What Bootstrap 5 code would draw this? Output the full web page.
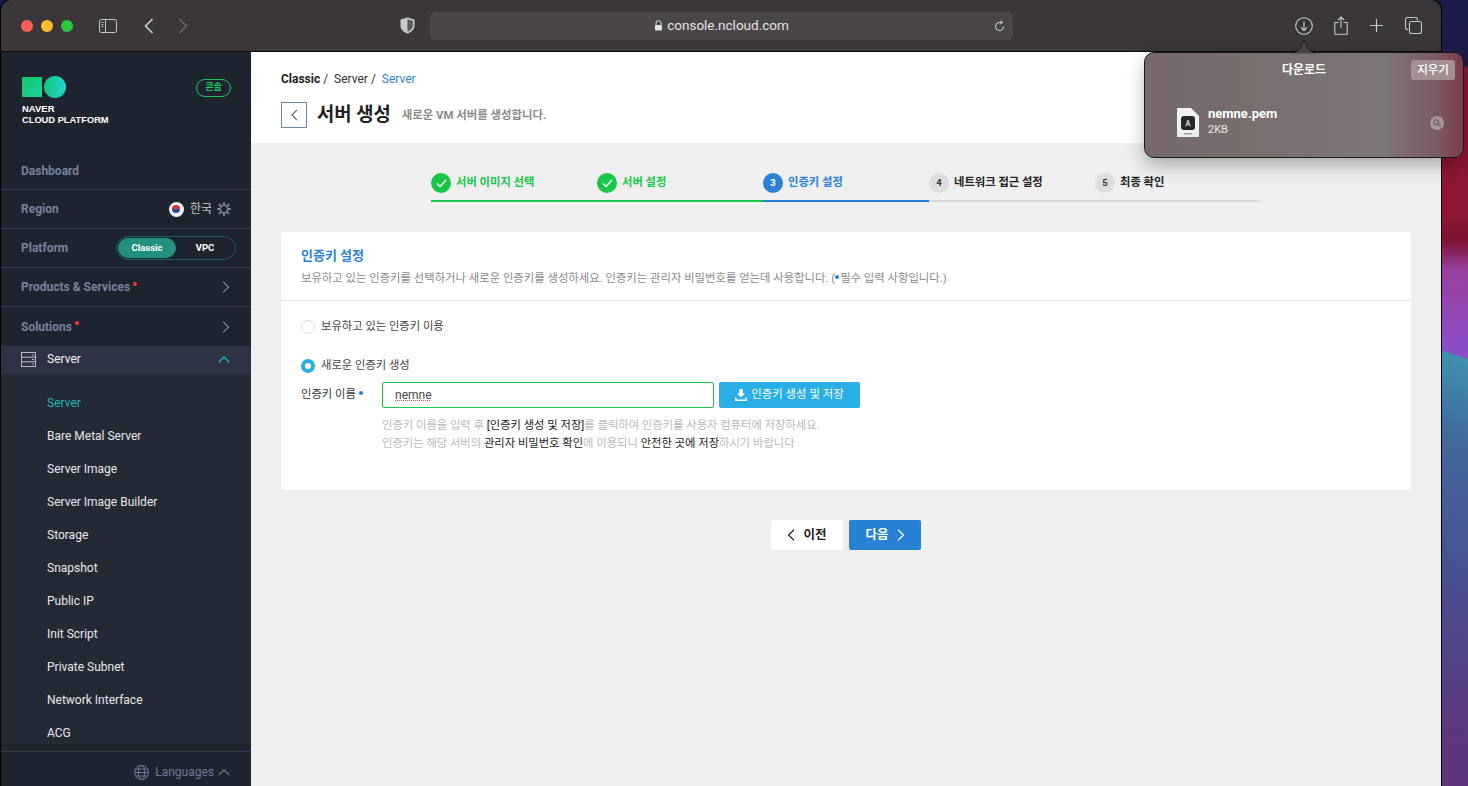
<!DOCTYPE html>
<html lang="ko">
<head>
<meta charset="utf-8">
<title>서버 생성</title>
<link href="https://cdn.jsdelivr.net/npm/bootstrap@5.3.0/dist/css/bootstrap.min.css" rel="stylesheet">
<style>
html,body{height:786px;overflow:hidden}
body{font-family:Roboto,"Noto Sans CJK KR",sans-serif;font-size:12px;color:#222;position:relative;background:#1c1c4a}
.win-shell{width:1440px;height:786px;margin-left:1px;border-radius:10px 10px 0 0;overflow:hidden;box-shadow:0 0 0 1px #000;flex:none;position:relative}
.wall-strip{flex:1;height:786px;margin-left:1px;
 background:linear-gradient(198deg,transparent 341px,#3f92b0 342px,#42699c 420px,#4a4f90 560px,#5a3a80 680px,#5f3478 756px),
 linear-gradient(180deg,#1c1c4a 0,#1e1c4a 66px,#8f1733 68px,#8e1632 215px,#7a1130 240px,#9a3f9f 270px,#8a4fc8 350px,#8a4fc8 370px)}
.tbar{height:52px;background:#3a3639;border-bottom:1px solid #0c0c0c;color:#c9c7c8;flex:none}
.tl{width:12px;height:12px;border-radius:50%}
.tl-r{background:#ff5f57}.tl-y{background:#febc2e}.tl-g{background:#28c840}
.urlbar{width:583px;height:28px;background:#4a4649;border-radius:6px;color:#e6e4e5;font-size:13.5px}
.tbar-l{width:429px;padding-left:20px}
.tbar-r{padding-right:19px}
.tbar svg{display:block}
.side{width:250px;background:#1e2330;flex:none;height:734px;overflow:hidden}
.logo-box{height:104px;padding:25px 20px 0 21px}
.logo-sq{width:20px;height:20px;background:linear-gradient(135deg,#0fc66c,#21d0a0)}
.logo-ci{width:22px;height:22px;border-radius:50%;background:linear-gradient(90deg,#12c877,#24d3cd);margin:-1px 0 0 2px}
.logo-t{font-family:"Liberation Sans",sans-serif;font-weight:700;font-size:9.3px;line-height:10.5px;color:#fff;margin-top:6px}
.logo-t b{font-weight:700;font-size:9.5px}
.console-pill{width:35px;height:18px;border:1px solid #19c85c;border-radius:9px;color:#19c85c;font-size:9px;font-weight:700;margin:2px 0 0 0}
.s-row{height:39px;border-bottom:1px solid #333c50;padding:0 21px 0 20px;color:#75849c;font-weight:700;font-size:12px}
.s-dash{height:34px;padding-bottom:4px}
.s-flag{width:15px;height:15px;border-radius:50%;background:#f2f2f2;margin-right:2px}
.s-region{color:#c4c8d0;font-weight:400}
.s-gear{margin-left:5px;margin-right:-1px}
.pform{width:120px;height:24px;border:1px solid #1f5c5c;border-radius:12px;padding:1px;margin-right:-6px;font-size:9.5px;color:#fff}
.pform span{flex:1;text-align:center}
.pform .on{background:#22907f;border-radius:11px;line-height:20px}
.reddot{width:4px;height:4px;border-radius:50%;background:#f33;margin:-7px 0 0 3px}
.s-open{height:28px;background:#2d3245;color:#f3f3f3;font-weight:400;padding:0 21px 2px 20px;font-size:12px}
.s-open .s-ic{margin-right:10px}
.s-sub{background:#242936;height:370px;padding-top:13px;overflow:hidden}
.s-sub a{display:block;height:33px;line-height:33px;padding-left:46px;color:#e6e8ec;text-decoration:none;font-size:12px}
.s-sub a.cur{color:#20b5b5}
.s-lang{border-top:1px solid #333c50;height:35px;padding:6px 21px 0 0;color:#6d7d97;font-size:12px}
.s-lang .s-globe{margin-right:6px}
.s-gap{height:7px;background:#20242f}
.mainp{background:#efefef;height:734px;overflow:hidden}
.ph{height:91px;background:#fff;padding:20px 30px 0}
.crumb{font-size:12px;color:#333;line-height:14px}
.crumb b{color:#222;font-weight:700}
.crumb i{font-style:normal;color:#2c86d6}
.ph-line{margin-top:16px}
.backb{width:26px;height:26px;border:1px solid #6d87a5;color:#4d6680;margin-right:10px;background:#fff}
.ph-h{font-size:18.800px;font-weight:700;color:#222;line-height:24px}
.ph-s{font-size:11.4px;font-weight:700;color:#8a8a8a;margin-left:11px;margin-top:2px}
.stepper{width:830px;margin:18px auto 0;padding:0}
.stp{width:166px;height:41px;border-bottom:2px solid #dadada;font-size:11.3px;font-weight:700;color:#222;gap:5px;padding-top:12px}
.stp .tx{line-height:20px}
.stp .nn{width:20px;height:20px;border-radius:50%;background:#dedede;font-size:9.5px;color:#333}
.stp.done{border-color:#19c64a;color:#19c64a}
.stp.done .nn{background:#19c64a;color:#fff}
.stp.act{border-color:#2b7fd6;color:#2b7fd6}
.stp.act .nn{background:#2b7fd6;color:#fff}
.panel{margin:30px 30px 0;background:#fff;border-radius:3px;height:258px}
.panel-h{height:69px;border-bottom:1px solid #e3e3e3;padding:15px 20px 0}
.panel-t{font-size:13px;font-weight:700;color:#2b7fd6;line-height:17px}
.panel-d{font-size:11.35px;color:#8a8a8a;line-height:16px;margin-top:6px}
.bdot{display:inline-block;width:4px;height:4px;border-radius:50%;background:#1f7ed8;vertical-align:3px;margin-right:1px}
.panel-b{padding:17px 20px 0;font-size:11.3px;color:#444}
.radline{height:18px}
.radline+.radline{margin-top:21px}
.rad{width:14px;height:14px;border-radius:50%;border:1px solid #dcdcdc;background:#fff;margin-right:6px}
.rad.on{border:4px solid #29aee6}
.keyrow{margin-top:7px}
.keylab{width:81px;color:#333}
.keyinp{width:332px;height:26px;border:1px solid #19c64a;border-radius:2px;padding:0 12px;font-size:12px;color:#444;line-height:24px}
.keyinp u{text-decoration:underline dotted #e04a4a}
.keybtn{width:141px;height:26px;margin-left:5px;background:#29aee6;color:#fff;border-radius:2px;font-size:11.4px;gap:4px}
.keyhelp{padding-left:81px;color:#b9b9b9;line-height:18px;margin-top:9px;font-size:11.3px}
.keyhelp b{font-weight:400;color:#222}
.navb{margin-top:30px;gap:6px}
.navb span.bt{width:72px;height:30px;border-radius:2px;font-size:12.5px;font-weight:700;gap:8px}
.bt-w{background:#fff;color:#222}
.bt-b{background:#2781d4;color:#fff}
.dlpop{position:absolute;left:1144px;top:52px;width:320px;height:106px;border-radius:10px;border:1px solid #1a1a1a;color:#fff;
 background:linear-gradient(90deg,#77696b 0,#7a6d6e 30%,#7d7677 75%,#7b5a62 92%,#7d3a4a 100%);box-shadow:0 8px 18px rgba(0,0,0,.28)}
.dlarrow{position:absolute;left:1292px;top:39px;z-index:2}
.dl-t{position:absolute;left:0;right:0;top:8px;text-align:center;font-size:12px;font-weight:700}
.dl-c{position:absolute;right:8px;top:7px;width:44px;height:20px;background:#a48f92;border-radius:3px;font-size:11.5px;text-align:center;line-height:20px;font-weight:500}
.dl-f{position:absolute;left:32px;top:55px}
.dl-n{position:absolute;left:63px;top:53px;font-size:13px;font-weight:700;line-height:16px}
.dl-s{position:absolute;left:63px;top:70px;font-size:11px;line-height:14px;color:#e9e6e6}
.dl-m{position:absolute;left:285px;top:63px;width:14px;height:14px;border-radius:50%;background:#a79598}
</style>
</head>
<body class="d-flex">
<div class="win-shell d-flex flex-column">
  <div class="tbar d-flex align-items-center">
    <div class="tbar-l d-flex align-items-center">
      <span class="tl tl-r"></span><span class="tl tl-y ms-2"></span><span class="tl tl-g ms-2"></span>
      <svg style="margin-left:26px" width="18" height="14" viewBox="0 0 18 14" fill="none" stroke="#c9c7c8"><rect x=".5" y=".5" width="17" height="13" rx="2"/><path d="M6.500 .5v13"/><path d="M2.500 3.500h2M2.500 5.500h2M2.500 7.500h2"/></svg>
      <svg style="margin-left:27px" width="10" height="16" viewBox="0 0 10 16" fill="none" stroke="#d5d3d4" stroke-width="1.600"><path d="M8.500 1 1.500 8l7 7"/></svg>
      <svg style="margin-left:24px" width="10" height="16" viewBox="0 0 10 16" fill="none" stroke="#686568" stroke-width="1.600"><path d="M1.500 1l7 7-7 7"/></svg>
      <svg style="margin-left:212px" width="15" height="17" viewBox="0 0 15 17"><path d="M7.500 .5 14.500 2.500V9c0 3.500-3 6-7 7.500C3.500 15 .5 12.500.5 9V2.500Z" fill="#c9c7c8"/><path d="M7.500 2.300 12.800 3.800V9c0 2.600-2.200 4.500-5.300 5.700Z" fill="#5d595c"/></svg>
    </div>
    <div class="urlbar d-flex align-items-center justify-content-center position-relative">
      <svg class="me-1" width="9" height="11" viewBox="0 0 9 11"><path d="M2 5V3.200a2.500 2.500 0 0 1 5 0V5" fill="none" stroke="#e6e4e5"/><rect x="1" y="5" width="7" height="5.500" rx="1" fill="#e6e4e5"/></svg>
      <span>console.ncloud.com</span>
      <svg class="position-absolute end-0 me-2" width="11" height="12" viewBox="0 0 11 12" fill="none" stroke="#c9c7c8" stroke-width="1.100"><path d="M9.500 6.500A4 4 0 1 1 6 2.500H8M6.500 .8 8.300 2.500 6.500 4.200"/></svg>
    </div>
    <div class="tbar-r d-flex align-items-center ms-auto">
      <svg width="18" height="18" viewBox="0 0 18 18" fill="none" stroke="#d2d0d1" stroke-width="1.100"><circle cx="9" cy="9" r="8.300"/><path d="M9 4.500v9M5.800 10.300 9 13.500l3.200-3.200"/></svg>
      <svg style="margin-left:21px" width="14" height="19" viewBox="0 0 14 19" fill="none" stroke="#c9c7c8" stroke-width="1.100"><path d="M4.500 6.500H.8v11.700h12.400V6.500H9.500M7 12V1M3.800 4 7 1l3.200 3"/></svg>
      <svg style="margin-left:22px" width="13" height="13" viewBox="0 0 13 13" stroke="#c9c7c8" stroke-width="1.200"><path d="M6.500 0v13M0 6.500h13"/></svg>
      <svg style="margin-left:22px" width="17" height="17" viewBox="0 0 17 17" fill="none" stroke="#c9c7c8" stroke-width="1.100"><path d="M3.500 12.500h-1a2 2 0 0 1-2-2V2.500a2 2 0 0 1 2-2h8a2 2 0 0 1 2 2v1"/><rect x="4.500" y="4.500" width="12" height="12" rx="2"/></svg>
    </div>
  </div>
  <div class="d-flex flex-grow-1">
    <aside class="side">
      <div class="logo-box d-flex justify-content-between">
        <div>
          <div class="d-flex"><span class="logo-sq"></span><span class="logo-ci"></span></div>
          <div class="logo-t"><b>NAVER</b><br>CLOUD PLATFORM</div>
        </div>
        <span class="console-pill d-flex align-items-center justify-content-center">콘솔</span>
      </div>
      <div class="s-row s-dash d-flex align-items-center">Dashboard</div>
      <div class="s-row d-flex align-items-center justify-content-between">
        <span>Region</span>
        <span class="d-flex align-items-center"><span class="s-flag d-flex align-items-center justify-content-center"><svg width="8" height="8" viewBox="0 0 8 8"><path d="M0 4a4 4 0 0 1 8 0Z" fill="#d33"/><path d="M0 4a4 4 0 0 0 8 0Z" fill="#25509c"/></svg></span><span class="s-region ms-1">한국</span>
        <svg class="s-gear" width="14" height="14" viewBox="0 0 14 14" fill="none" stroke="#75849c"><circle cx="7" cy="7" r="3.800" stroke-width="1.600"/><path stroke-width="1.800" d="M7 0v3.200M7 10.800V14M0 7h3.200M10.800 7H14M2 2l2.300 2.300M9.700 9.700 12 12M2 12l2.300-2.300M9.700 4.300 12 2"/></svg></span>
      </div>
      <div class="s-row d-flex align-items-center justify-content-between">
        <span>Platform</span>
        <span class="pform d-flex align-items-center"><span class="on">Classic</span><span>VPC</span></span>
      </div>
      <div class="s-row d-flex align-items-center">
        <span>Products &amp; Services</span><span class="reddot"></span>
        <svg class="ms-auto" width="8" height="12" viewBox="0 0 8 12" fill="none" stroke="#75849c" stroke-width="1.200"><path d="M1 .8 6.500 6 1 11.200"/></svg>
      </div>
      <div class="s-row d-flex align-items-center border-0">
        <span>Solutions</span><span class="reddot"></span>
        <svg class="ms-auto" width="8" height="12" viewBox="0 0 8 12" fill="none" stroke="#75849c" stroke-width="1.200"><path d="M1 .8 6.500 6 1 11.200"/></svg>
      </div>
      <div class="s-open d-flex align-items-center">
        <svg class="s-ic" width="16" height="15" viewBox="0 0 16 15" fill="none" stroke="#b9bcc4"><rect x=".5" y=".5" width="14" height="14"/><path d="M.5 5.200h14M.5 9.800h14M11 3h2M11 7.500h2M11 12h2"/></svg>
        <span>Server</span>
        <svg class="ms-auto" width="12" height="7" viewBox="0 0 12 7" fill="none" stroke="#1fb9b9" stroke-width="1.300"><path d="M.8 6.200 6 1l5.200 5.200"/></svg>
      </div>
      <nav class="s-sub">
        <a class="cur" href="#">Server</a>
        <a href="#">Bare Metal Server</a>
        <a href="#">Server Image</a>
        <a href="#">Server Image Builder</a>
        <a href="#">Storage</a>
        <a href="#">Snapshot</a>
        <a href="#">Public IP</a>
        <a href="#">Init Script</a>
        <a href="#">Private Subnet</a>
        <a href="#">Network Interface</a>
        <a href="#">ACG</a>
      </nav>
      <div class="s-gap"></div>
      <div class="s-lang d-flex align-items-center justify-content-end">
        <svg class="s-globe" width="15" height="15" viewBox="0 0 15 15" fill="none" stroke="#6d7d97"><circle cx="7.500" cy="7.500" r="7"/><ellipse cx="7.500" cy="7.500" rx="3.200" ry="7"/><path d="M.5 7.500h14M1.500 4h12M1.500 11h12"/></svg>
        <span>Languages</span>
        <svg class="ms-1" width="12" height="7" viewBox="0 0 12 7" fill="none" stroke="#6d7d97" stroke-width="1.200"><path d="M.8 6.200 6 1l5.200 5.200"/></svg>
      </div>
    </aside>
    <main class="mainp flex-grow-1">
      <div class="ph">
        <div class="crumb"><b>Classic</b> /&nbsp; Server /&nbsp; <i>Server</i></div>
        <div class="ph-line d-flex align-items-center">
          <span class="backb d-flex align-items-center justify-content-center"><svg width="7" height="12" viewBox="0 0 7 12" fill="none" stroke="#4d6680" stroke-width="1.100"><path d="M6 .8.900 6 6 11.200"/></svg></span>
          <span class="ph-h">서버 생성</span>
          <span class="ph-s">새로운 VM 서버를 생성합니다.</span>
        </div>
      </div>
      <div class="stepper d-flex">
        <div class="stp done d-flex align-items-start"><span class="nn d-flex align-items-center justify-content-center"><svg width="11" height="9" viewBox="0 0 11 9" fill="none" stroke="#fff" stroke-width="1.400"><path d="M1 4.500 4 7.500 10 1"/></svg></span><span class="tx">서버 이미지 선택</span></div>
        <div class="stp done d-flex align-items-start"><span class="nn d-flex align-items-center justify-content-center"><svg width="11" height="9" viewBox="0 0 11 9" fill="none" stroke="#fff" stroke-width="1.400"><path d="M1 4.500 4 7.500 10 1"/></svg></span><span class="tx">서버 설정</span></div>
        <div class="stp act d-flex align-items-start"><span class="nn d-flex align-items-center justify-content-center">3</span><span class="tx">인증키 설정</span></div>
        <div class="stp d-flex align-items-start"><span class="nn d-flex align-items-center justify-content-center">4</span><span class="tx">네트워크 접근 설정</span></div>
        <div class="stp d-flex align-items-start"><span class="nn d-flex align-items-center justify-content-center">5</span><span class="tx">최종 확인</span></div>
      </div>
      <section class="panel">
        <div class="panel-h">
          <div class="panel-t">인증키 설정</div>
          <div class="panel-d">보유하고 있는 인증키를 선택하거나 새로운 인증키를 생성하세요. 인증키는 관리자 비밀번호를 얻는데 사용합니다. (<span class="bdot"></span>필수 입력 사항입니다.)</div>
        </div>
        <div class="panel-b">
          <div class="radline d-flex align-items-center"><span class="rad"></span>보유하고 있는 인증키 이용</div>
          <div class="radline d-flex align-items-center"><span class="rad on"></span>새로운 인증키 생성</div>
          <div class="keyrow d-flex align-items-center">
            <span class="keylab">인증키 이름 <span class="bdot"></span></span>
            <span class="keyinp"><u>nemne</u></span>
            <span class="keybtn d-flex align-items-center justify-content-center"><svg width="12" height="12" viewBox="0 0 12 12" fill="#fff"><path d="M4.300 0h3.400v4.500h2.300L6 8.500 2 4.500h2.300ZM0 8.500h1.500v2h9v-2H12V12H0Z"/></svg>인증키 생성 및 저장</span>
          </div>
          <div class="keyhelp">인증키 이름을 입력 후 <b>[인증키 생성 및 저장]</b>를 클릭하여 인증키를 사용자 컴퓨터에 저장하세요.<br>인증키는 해당 서버의 <b>관리자 비밀번호 확인</b>에 이용되니 <b>안전한 곳에 저장</b>하시기 바랍니다</div>
        </div>
      </section>
      <div class="navb d-flex justify-content-center">
        <span class="bt bt-w d-flex align-items-center justify-content-center"><svg width="8" height="12" viewBox="0 0 8 12" fill="none" stroke="#222" stroke-width="1.200"><path d="M7 .8 1.500 6 7 11.200"/></svg>이전</span>
        <span class="bt bt-b d-flex align-items-center justify-content-center">다음<svg width="8" height="12" viewBox="0 0 8 12" fill="none" stroke="#fff" stroke-width="1.200"><path d="M1 .8 6.500 6 1 11.200"/></svg></span>
      </div>
    </main>
  </div>
</div>
<div class="wall-strip"></div>
<div class="dlpop">
  <div class="dl-t">다운로드</div>
  <div class="dl-c">지우기</div>
  <svg class="dl-f" width="22" height="29" viewBox="0 0 22 29"><path d="M1 0h13l8 8v20a1 1 0 0 1-1 1H1a1 1 0 0 1-1-1V1a1 1 0 0 1 1-1Z" fill="#f1f0f0"/><rect x="4" y="8" width="14" height="14" rx="3" fill="#262626"/><path d="M8 19l2-7h2l2 7-3-2Z" fill="#aaa"/><rect x="7" y="25" width="8" height="1.500" fill="#999"/></svg>
  <div class="dl-n">nemne.pem</div>
  <div class="dl-s">2KB</div>
  <div class="dl-m d-flex align-items-center justify-content-center"><svg width="8" height="8" viewBox="0 0 8 8" fill="none" stroke="#6d5f62" stroke-width="1.300"><circle cx="3.300" cy="3.300" r="2.400"/><path d="M5 5l2.500 2.500"/></svg></div>
</div>
<svg class="dlarrow" width="24" height="15" viewBox="0 0 24 15"><path d="M0 14.500C4 14 6 12 8 9.500L12 .8l0 0L16 9.500C18 12 20 14 24 14.500Z" fill="#4a4446" stroke="none"/><path d="M0 13.500C4 13.200 7 11 8.500 8.500L12 1l3.500 7.500C17 11 20 13.200 24 13.500" fill="none" stroke="#111" stroke-width=".8"/></svg>
</body>
</html>
